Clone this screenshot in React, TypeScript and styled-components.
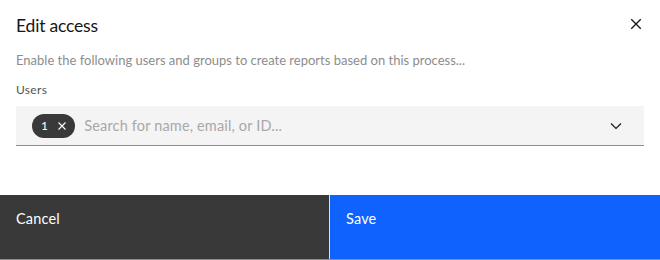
import styled, { createGlobalStyle } from "styled-components";
import { useState } from "react";

const GlobalStyle = createGlobalStyle`
  html, body {
    margin: 0;
    padding: 0;
    background: #ffffff;
  }
  body {
    font-family: Lato, "Liberation Sans", sans-serif;
    color: #161616;
  }
`;

// thin cross, drawn with strokes so it stays light like the reference
const Cross = ({ size, span, weight }: { size: number; span: number; weight: number }) => {
  const a = (size - span) / 2;
  const b = a + span;
  return (
    <svg width={size} height={size} viewBox={`0 0 ${size} ${size}`} fill="none" stroke="currentColor" strokeWidth={weight}>
      <path d={`M${a} ${a}L${b} ${b}M${b} ${a}L${a} ${b}`} />
    </svg>
  );
};

const ChevronDown = () => (
  <svg width={12} height={8} viewBox="0 0 12 8" fill="none" stroke="currentColor" strokeWidth={1.1}>
    <path d="M1 1.5l5 5 5-5" />
  </svg>
);

const App = () => {
  const [search, setSearch] = useState("");
  const [selected, setSelected] = useState(1);

  return (
    <>
      <GlobalStyle />
      <Modal>
        <Header>
          <Title>Edit access</Title>
          <CloseButton aria-label="Close">
            <Cross size={16} span={9.5} weight={1.4} />
          </CloseButton>
        </Header>
        <Content>
          <Description>
            Enable the following users and groups to create reports based on this process...
          </Description>
          <Label>Users</Label>
          <Field>
            {selected > 0 && (
              <Tag>
                {selected}
                <TagClose onClick={() => setSelected(0)}>
                  <Cross size={12} span={7} weight={1.1} />
                </TagClose>
              </Tag>
            )}
            <SearchInput
              type="text"
              placeholder="Search for name, email, or ID..."
              value={search}
              onChange={(e) => setSearch(e.target.value)}
            />
            <MenuIcon>
              <ChevronDown />
            </MenuIcon>
          </Field>
        </Content>
        <Footer>
          <FooterButton $kind="secondary">Cancel</FooterButton>
          <FooterButton $kind="primary">Save</FooterButton>
        </Footer>
      </Modal>
    </>
  );
};

const Modal = styled.div`
  width: 660px;
  height: 260px;
  display: flex;
  flex-direction: column;
  background: #ffffff;
  border-bottom: 1px solid #8d8d8d;
  box-sizing: border-box;
`;

const Header = styled.div`
  display: flex;
  justify-content: space-between;
  align-items: flex-start;
  padding: 12px 16px 0 16px;
`;

const Title = styled.h2`
  margin: 0;
  font-size: 17.5px;
  line-height: 28px;
  letter-spacing: -0.2px;
  font-weight: 400;
  color: #161616;
`;

const CloseButton = styled.button`
  display: flex;
  align-items: center;
  justify-content: center;
  width: 16px;
  height: 24px;
  padding: 0;
  border: none;
  background: transparent;
  color: #161616;
  cursor: pointer;
`;

const Content = styled.div`
  display: flex;
  flex-direction: column;
  padding: 10px 16px 0;
  flex: 1;
`;

const Description = styled.p`
  margin: 0 0 12px;
  font-size: 13px;
  line-height: 20px;
  color: #8d8d8d;
`;

const Label = styled.label`
  font-size: 12px;
  line-height: 16px;
  letter-spacing: 0.32px;
  color: #525252;
  margin-bottom: 8px;
`;

const Field = styled.div`
  display: flex;
  align-items: center;
  height: 40px;
  box-sizing: border-box;
  padding: 0 22px 0 16px;
  background: #f4f4f4;
  border-bottom: 1px solid #8d8d8d;
`;

const Tag = styled.span`
  display: inline-flex;
  align-items: center;
  gap: 8px;
  height: 24px;
  padding: 0 7px 0 9px;
  margin-right: 9px;
  border-radius: 12px;
  background: #393939;
  color: #ffffff;
  font-size: 12px;
  letter-spacing: 0.32px;
`;

const TagClose = styled.button`
  display: flex;
  align-items: center;
  justify-content: center;
  width: 12px;
  height: 12px;
  padding: 0;
  border: none;
  background: transparent;
  color: #ffffff;
  cursor: pointer;
`;

const SearchInput = styled.input`
  flex: 1;
  min-width: 0;
  height: 100%;
  padding: 0;
  border: none;
  background: transparent;
  font-family: inherit;
  font-size: 14.5px;
  letter-spacing: 0.16px;
  color: #161616;
  outline: none;

  &::placeholder {
    color: #a8a8a8;
  }
`;

const MenuIcon = styled.span`
  display: flex;
  color: #161616;
`;

const Footer = styled.div`
  display: flex;
  gap: 1px;
  height: 64px;
  background: #e0e0e0;
`;

const FooterButton = styled.button<{ $kind: "primary" | "secondary" }>`
  flex: ${(p) => (p.$kind === "primary" ? "0 0 330px" : "1 1 auto")};
  display: flex;
  align-items: flex-start;
  padding: 15px 16px;
  border: none;
  font-family: inherit;
  font-size: 14.5px;
  line-height: 18px;
  letter-spacing: 0.16px;
  color: #ffffff;
  text-align: left;
  cursor: pointer;
  background: ${(p) => (p.$kind === "primary" ? "#0f62fe" : "#393939")};
`;

export default App;
